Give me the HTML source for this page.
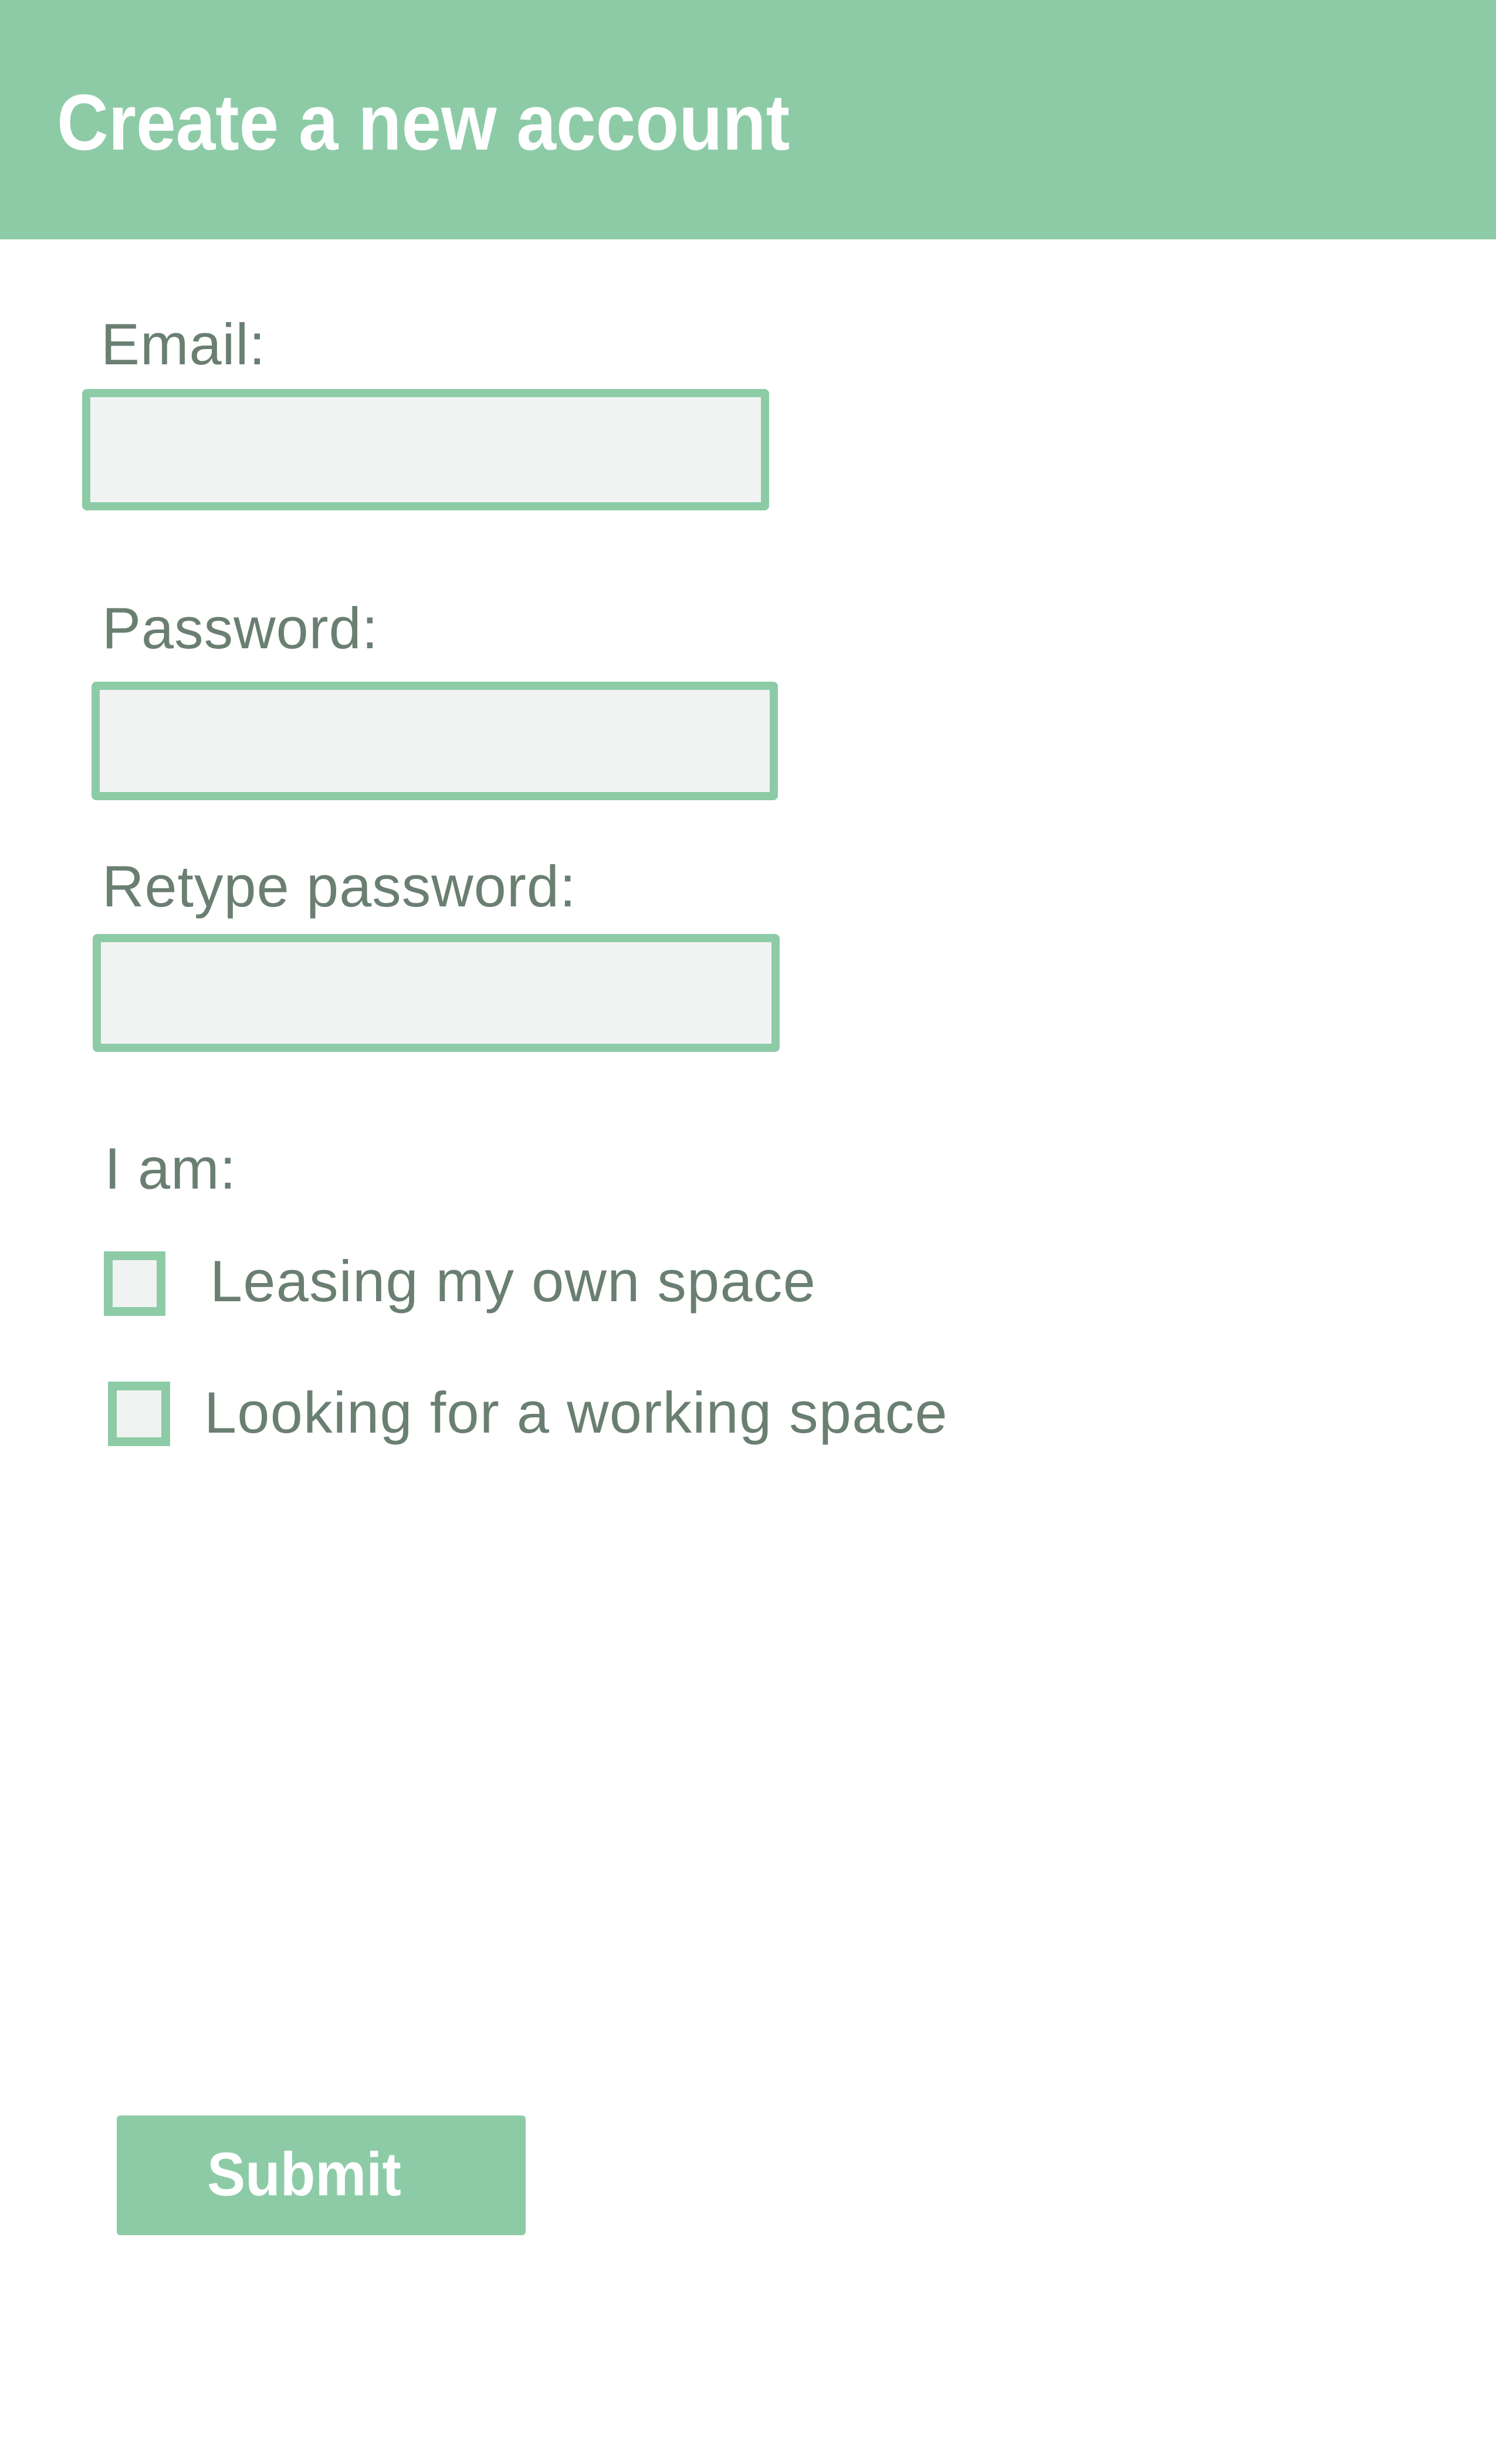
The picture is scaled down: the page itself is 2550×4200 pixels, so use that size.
<!DOCTYPE html>
<html><head><meta charset="utf-8"><style>
html,body{margin:0;padding:0}
body{width:2550px;height:4200px;background:#fff;position:relative;overflow:hidden;font-family:"Liberation Sans",Arial,sans-serif}
.hdr{position:absolute;left:0;top:0;width:2550px;height:408px;background:#8dcba7}
.t{position:absolute;white-space:nowrap;line-height:1}
.title{left:97px;top:141px;font-size:135px;font-weight:bold;color:#fff;transform:scaleX(0.9);transform-origin:left top}
.lbl{font-size:99px;color:#6a7f72;letter-spacing:1px}
.ck{letter-spacing:1.3px}
.box{position:absolute;box-sizing:border-box;border:14px solid #8dcba7;border-radius:8px;background:#f1f3f2}
.cb{position:absolute;box-sizing:border-box;border:15px solid #8dcba7;background:#f1f3f2}
.btn{position:absolute;left:199px;top:3606px;width:697px;height:204px;background:#8dcba7;border-radius:6px}
.sub{left:353px;top:3654px;font-size:105px;font-weight:bold;color:#fff;transform:scaleX(0.93);transform-origin:left top}
</style></head><body>
<div class="hdr"></div>
<div class="t title">Create a new account</div>

<div class="t lbl" style="left:172px;top:537px">Email:</div>
<div class="box" style="left:140px;top:663px;width:1171px;height:207px"></div>

<div class="t lbl" style="left:174px;top:1021px">Password:</div>
<div class="box" style="left:156px;top:1162px;width:1170px;height:202px"></div>

<div class="t lbl" style="left:174px;top:1461px">Retype password:</div>
<div class="box" style="left:158px;top:1592px;width:1171px;height:201px"></div>

<div class="t lbl" style="left:178px;top:1942px">I am:</div>

<div class="cb" style="left:177px;top:2133px;width:105px;height:110px"></div>
<div class="t lbl ck" style="left:358px;top:2134px">Leasing my own space</div>

<div class="cb" style="left:184px;top:2355px;width:106px;height:110px"></div>
<div class="t lbl ck" style="left:348px;top:2358px">Looking for a working space</div>

<div class="btn"></div>
<div class="t sub">Submit</div>
</body></html>
